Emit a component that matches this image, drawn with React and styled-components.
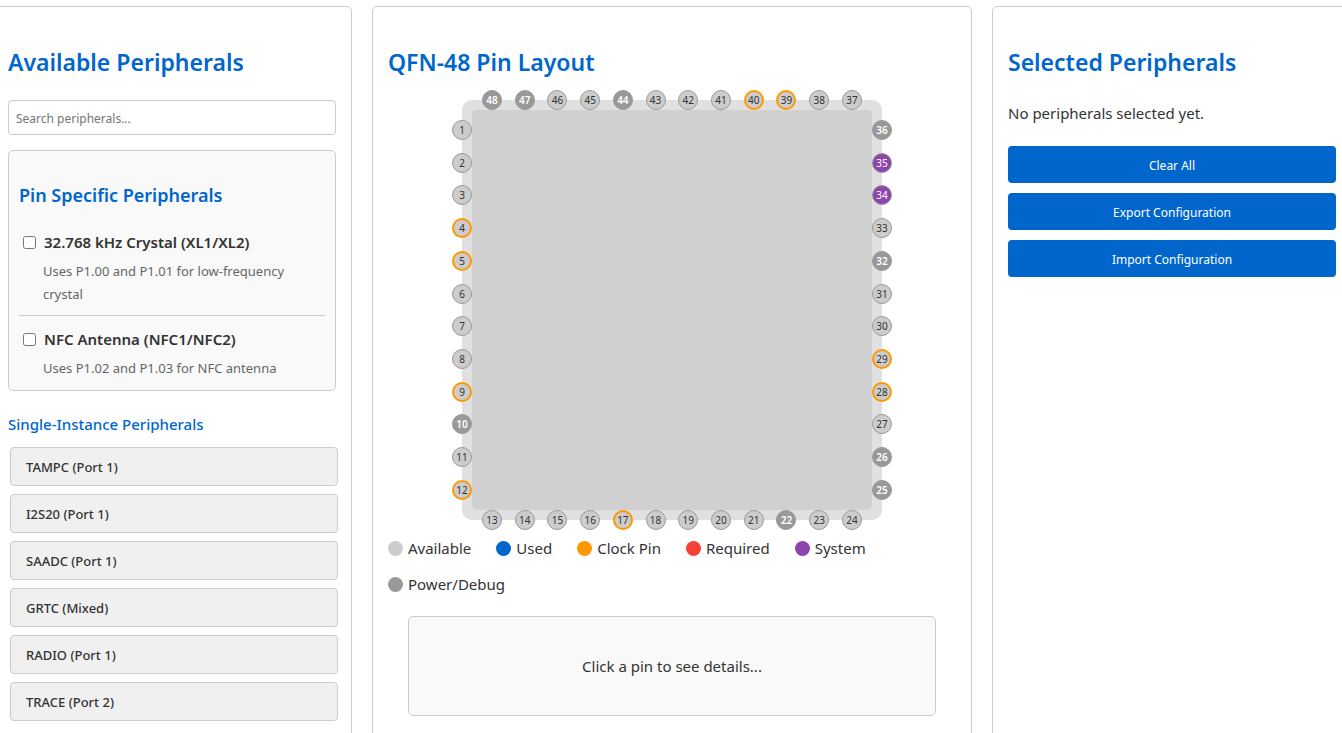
import React, { useState } from "react";
import styled, { createGlobalStyle, css } from "styled-components";

const GlobalStyle = createGlobalStyle`
  *, *::before, *::after { box-sizing: border-box; }
  body {
    margin: 0;
    background: #fff;
    color: #333;
    font-family: "Segoe UI", "Noto Sans", "Open Sans", sans-serif;
    font-size: 15px;
    line-height: 26px;
  }
  button, input { font-family: inherit; }
`;

const Page = styled.main`
  height: 100vh;
  padding-top: 6px;
  overflow: hidden;
`;

const Columns = styled.div`
  display: grid;
  grid-template-columns: 3fr 5fr 3fr;
  gap: 20px;
  min-height: 100vh;
  margin: 0 -10px 0 -8px;
`;

const Panel = styled.section`
  min-width: 0;
  padding: 15px;
  border: 1px solid #ccc;
  border-radius: 5px;
  background: #fff;
`;

const PanelTitle = styled.h2`
  margin: 21px 0 19px;
  color: #0066cc;
  font-size: 23px;
  font-weight: 600;
  line-height: 38px;
`;

const SearchInput = styled.input`
  display: block;
  width: 100%;
  height: 35px;
  padding: 9px 7px 8px;
  border: 1px solid #ccc;
  border-radius: 4px;
  background: #fff;
  color: #333;
  font-size: 12px;
  &::placeholder { color: #757575; }
`;

const PinSpecific = styled.div`
  margin-top: 15px;
  padding: 10px;
  border: 1px solid #ccc;
  border-radius: 5px;
  background: #f9f9f9;
`;

const GroupTitle = styled.h3`
  margin: 19px 0;
  color: #0066cc;
  font-size: 18px;
  font-weight: 600;
  line-height: 30px;
`;

const CheckItem = styled.div`
  & + & {
    margin-top: 9px;
    padding-top: 10px;
    border-top: 1px solid #ccc;
  }
`;

const CheckLabel = styled.label`
  display: flex;
  align-items: center;
  gap: 8px;
  padding-left: 4px;
  font-weight: 600;
`;

const CheckBox = styled.input`
  width: 13px;
  height: 13px;
  margin: 0;
`;

const CheckNote = styled.p`
  margin: 5px 0 0 24px;
  color: #666;
  font-size: 13px;
  line-height: 23px;
`;

const ListTitle = styled.h4`
  margin: 20px 0 10px;
  color: #0066cc;
  font-size: 15px;
  font-weight: 500;
  line-height: 26px;
`;

const PeripheralList = styled.div`
  display: grid;
  gap: 8px;
  margin: 0 -2px 0 2px;
`;

const PeripheralButton = styled.button`
  height: 39px;
  padding: 0 15px;
  border: 1px solid #ccc;
  border-radius: 4px;
  background: #f0f0f0;
  color: #333;
  font-size: 13px;
  font-weight: 500;
  text-align: left;
  cursor: pointer;
`;

const Chip = styled.div`
  display: grid;
  grid-template: 20px 400px 20px / 20px 400px 20px;
  justify-content: center;
  margin: -10px 0 5px;
`;

const ChipFrame = styled.div`
  display: grid;
  grid-area: 1 / 1 / -1 / -1;
  margin: 10px;
  padding: 10px;
  border-radius: 10px;
  background: #e0e0e0;
`;

const ChipBody = styled.div`
  border-radius: 5px;
  background: #d0d0d0;
`;

const sideStyles = {
  top: css`grid-area: 1 / 2; flex-direction: row-reverse; padding: 0 10px;`,
  right: css`grid-area: 2 / 3; flex-direction: column-reverse; padding: 10px 0;`,
  bottom: css`grid-area: 3 / 2; flex-direction: row; padding: 0 10px;`,
  left: css`grid-area: 2 / 1; flex-direction: column; padding: 10px 0;`,
};

const PinSide = styled.div`
  z-index: 1;
  display: flex;
  justify-content: space-between;
  ${({ $side }) => sideStyles[$side]}
`;

const pinStyles = {
  available: css`border: 1px solid #999; background: #ccc; color: #333;`,
  clock: css`border: 2px solid #ff9800; background: #ccc; color: #333;`,
  system: css`border: 1px solid #999; background: #8e44ad; color: #fff;`,
  power: css`border: 1px solid #999; background: #999; color: #fff; font-weight: 600;`,
};

const Pin = styled.button`
  display: flex;
  align-items: center;
  justify-content: center;
  width: 20px;
  height: 20px;
  padding: 0;
  border-radius: 50%;
  font-size: 10px;
  line-height: 16px;
  cursor: pointer;
  ${({ $kind }) => pinStyles[$kind]}
`;

const Legend = styled.ul`
  display: flex;
  flex-wrap: wrap;
  gap: 10px 25px;
  margin: 0;
  padding: 0;
  list-style: none;
`;

const LegendItem = styled.li`
  display: flex;
  align-items: center;
  gap: 5px;
  &::before {
    content: "";
    width: 15px;
    height: 15px;
    border-radius: 50%;
    background: ${({ $color }) => $color};
  }
`;

const PinDetails = styled.div`
  display: flex;
  align-items: center;
  justify-content: center;
  min-height: 100px;
  margin: 19px 20px 0;
  border: 1px solid #ccc;
  border-radius: 5px;
  background: #f9f9f9;
`;

const EmptyText = styled.p`
  margin: 0 0 20px;
`;

const Actions = styled.div`
  display: grid;
  gap: 10px;
`;

const ActionButton = styled.button`
  height: 37px;
  padding: 2px 15px 0;
  border: 0;
  border-radius: 4px;
  background: #0066cc;
  color: #fff;
  font-size: 12px;
  cursor: pointer;
`;

const pinSpecific = [
  { id: "lfxo", name: "32.768 kHz Crystal (XL1/XL2)", note: "Uses P1.00 and P1.01 for low-frequency crystal" },
  { id: "nfc", name: "NFC Antenna (NFC1/NFC2)", note: "Uses P1.02 and P1.03 for NFC antenna" },
];

const peripherals = [
  "TAMPC (Port 1)",
  "I2S20 (Port 1)",
  "SAADC (Port 1)",
  "GRTC (Mixed)",
  "RADIO (Port 1)",
  "TRACE (Port 2)",
];

const legend = [
  ["Available", "#ccc"],
  ["Used", "#0066cc"],
  ["Clock Pin", "#ff9800"],
  ["Required", "#f44336"],
  ["System", "#8e44ad"],
  ["Power/Debug", "#999"],
];

const sides = [
  ["left", 1],
  ["bottom", 13],
  ["right", 25],
  ["top", 37],
];

const clockPins = [4, 5, 9, 12, 17, 28, 29, 39, 40];
const systemPins = [34, 35];
const powerPins = [10, 22, 25, 26, 32, 36, 44, 47, 48];

function pinKind(pin) {
  if (clockPins.includes(pin)) return "clock";
  if (systemPins.includes(pin)) return "system";
  if (powerPins.includes(pin)) return "power";
  return "available";
}

export default function App() {
  const [pin, setPin] = useState(null);
  const [query, setQuery] = useState("");
  const shown = peripherals.filter((p) => p.toLowerCase().includes(query.toLowerCase()));

  return (
    <Page>
      <GlobalStyle />
      <Columns>
        <Panel>
          <PanelTitle>Available Peripherals</PanelTitle>
          <SearchInput
            type="text"
            aria-label="Search peripherals"
            placeholder="Search peripherals..."
            value={query}
            onChange={(e) => setQuery(e.target.value)}
          />
          <PinSpecific>
            <GroupTitle>Pin Specific Peripherals</GroupTitle>
            {pinSpecific.map(({ id, name, note }) => (
              <CheckItem key={id}>
                <CheckLabel htmlFor={id}>
                  <CheckBox type="checkbox" id={id} />
                  {name}
                </CheckLabel>
                <CheckNote>{note}</CheckNote>
              </CheckItem>
            ))}
          </PinSpecific>
          <ListTitle>Single-Instance Peripherals</ListTitle>
          <PeripheralList>
            {shown.map((name) => (
              <PeripheralButton key={name} type="button">{name}</PeripheralButton>
            ))}
          </PeripheralList>
        </Panel>

        <Panel>
          <PanelTitle>QFN-48 Pin Layout</PanelTitle>
          <Chip>
            <ChipFrame>
              <ChipBody />
            </ChipFrame>
            {sides.map(([side, first]) => (
              <PinSide key={side} $side={side}>
                {Array.from({ length: 12 }, (_, i) => first + i).map((n) => (
                  <Pin key={n} type="button" $kind={pinKind(n)} onClick={() => setPin(n)}>
                    {n}
                  </Pin>
                ))}
              </PinSide>
            ))}
          </Chip>
          <Legend>
            {legend.map(([name, color]) => (
              <LegendItem key={name} $color={color}>{name}</LegendItem>
            ))}
          </Legend>
          <PinDetails>{pin ? `Pin ${pin}` : "Click a pin to see details..."}</PinDetails>
        </Panel>

        <Panel>
          <PanelTitle>Selected Peripherals</PanelTitle>
          <EmptyText>No peripherals selected yet.</EmptyText>
          <Actions>
            <ActionButton type="button">Clear All</ActionButton>
            <ActionButton type="button">Export Configuration</ActionButton>
            <ActionButton type="button">Import Configuration</ActionButton>
          </Actions>
        </Panel>
      </Columns>
    </Page>
  );
}
